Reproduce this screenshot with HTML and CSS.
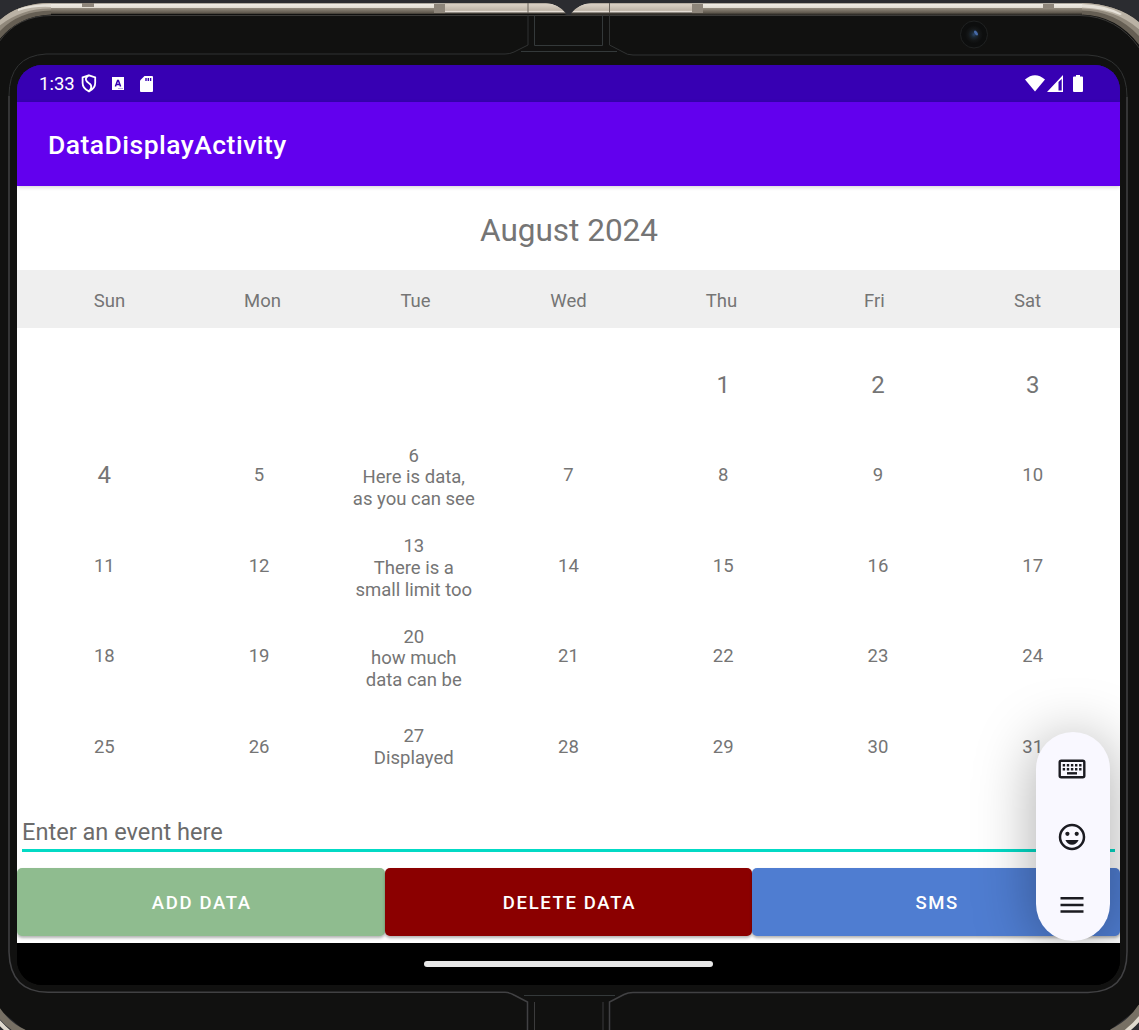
FILE: index.html
```html
<!DOCTYPE html>
<html lang="en">
<head>
<meta charset="utf-8">
<title>DataDisplayActivity</title>
<link rel="stylesheet" href="styles.css">
</head>
<body>
<div class="device">
  <svg class="device-frame" width="1139" height="1030" viewBox="0 0 1139 1030" aria-hidden="true">
    <defs>
      <linearGradient id="rail" gradientUnits="userSpaceOnUse" x1="0" y1="3" x2="0" y2="15">
        <stop offset="0" stop-color="#8d877c"/><stop offset=".12" stop-color="#efebe3"/>
        <stop offset=".38" stop-color="#e2ddd3"/><stop offset=".45" stop-color="#91897c"/>
        <stop offset=".8" stop-color="#615a4f"/><stop offset="1" stop-color="#252320"/>
      </linearGradient>
      <linearGradient id="cap" x1="0" y1="0" x2="0" y2="1">
        <stop offset="0" stop-color="#a39b8f"/><stop offset=".15" stop-color="#d8cfc3"/>
        <stop offset=".7" stop-color="#bdb3a6"/><stop offset=".8" stop-color="#ece5dc"/><stop offset="1" stop-color="#393530"/>
      </linearGradient>
      <radialGradient id="lens"><stop offset="0" stop-color="#2b4668"/><stop offset=".3" stop-color="#1a2732"/><stop offset=".65" stop-color="#141617"/><stop offset="1" stop-color="#0d0e0e"/></radialGradient>
    </defs>
    <path fill="#2b2c30" d="M0 0H1139V1030H0Z"/>
    <path fill="#111110" d="M0 38Q16 14 52 14H564L569 16L574 14H1080Q1120 14 1139 42V1008L1110 1030H24L0 1010Z"/>
    <path fill="url(#rail)" d="M50 3H545Q559 4 566 14H50ZM571 14Q578 4 592 3H1083V15H571Z"/>
    <path fill="url(#cap)" d="M445 3H545Q559 4 566 13.5H445ZM571 13.5Q578 4 592 3H692V13.5H571Z"/>
    <path fill="#8d857a" d="M434 4H445V13H434ZM692 4H703V13H692ZM82 3H94V7H82ZM1043 4H1054V8H1043Z"/>
    <path stroke="#69635b" d="M528 3V13M609.500 3V13"/>
    <path fill="#665f54" d="M-1 21Q18 3 51 3V14.500Q18 16 -1 40ZM1082 3Q1118 4 1140 23V46Q1117 15.500 1082 14.500Z"/>
    <path fill="#90887b" d="M-1 21Q18 3 51 3V10.500Q18 11 -1 32ZM1082 3Q1118 4 1140 23V37Q1116 11 1082 10.500Z"/>
    <path fill="#bab2a5" d="M-1 21Q18 3 51 3V8.500Q22 8 -1 26ZM1082 3Q1118 4 1140 23V30Q1116 9 1082 8.500Z"/>
    <path fill="#e5e0d7" d="M18 9Q32 4 51 4V7Q34 6 18 11ZM1082 4Q1107 5 1122 14L1120 15Q1104 8 1082 7.500Z"/>
    <g fill="none">
      <path stroke="#3b3a38" d="M-1 42Q17 15.500 52 15.500H1080Q1117 16 1140 49"/>
      <path stroke="#777064" stroke-width="7" d="M-3 1010Q8 1026 24 1033"/>
      <path stroke="#e0dace" stroke-width="4" d="M-3 1020Q6 1030 12 1034"/>
      <path stroke="#777064" stroke-width="8" d="M1142 1007Q1131 1024 1112 1033"/>
      <path stroke="#e0dace" stroke-width="4" d="M1143 1014Q1135 1025 1124 1033"/>
      <path stroke="#303232" d="M528 15V45L514 52Q510 54 505 54H46Q9 56 9 96"/>
      <path stroke="#303232" d="M609.500 15V45L623 52Q627 55 633 55H1088Q1127 57 1127 97"/>
      <path stroke="#414143" stroke-width="1.500" d="M9 96V952Q10 992 48 992.300H505Q510 992.500 514 995L527.500 1002V1030M609.500 1030V1002L624 994.500Q628 992.500 633 992.500H1088Q1127 992 1127 952V97"/>
      <path stroke="#34393a" d="M534.500 15V45.500H602.500V15M521 51.500H617M524 995.500H615"/>
      <path stroke="#3b3b3c" d="M534.500 1002V1030M603 1002V1030"/>
    </g>
    <circle cx="974" cy="34.500" r="13.500" fill="#0d0e0e" stroke="#202222"/>
    <circle cx="974" cy="34.500" r="9" fill="url(#lens)"/>
    <ellipse cx="976" cy="33" rx="1.500" ry="2.800" fill="#466aa8" transform="rotate(-35 976 33)"/>
  </svg>

  <main class="screen">
    <header class="status-bar">
      <div class="status-left">
        <span class="clock">1:33</span>
        <svg class="shield" width="16" height="19" viewBox="0 0 16 19"><path d="M8 1.300 14.200 3.500V9Q14.200 14.500 8 17.400 1.600 14.500 1.600 9V3.500ZM8 1.500Q4.200 3.500 5 6 5.500 7.600 8 9.300 10.700 11 10.200 13.500 9.700 15.800 8 17" fill="none" stroke="#fff" stroke-width="1.800"/></svg>
        <svg class="letter-badge" width="12" height="13" viewBox="0 0 12 13"><path fill="#fff" d="M0 0H12V13H0Z"/><path fill="none" stroke="#3700b3" stroke-width="1.500" d="M3.400 9.500 5.600 3.500H6.400L8.600 9.500M4.200 7.500H7.800"/><path stroke="#b8a8e4" d="M6 11.500H11"/></svg>
        <svg width="13" height="16" viewBox="0 0 13 16"><path fill="#fff" d="M4.500 0H12Q13 0 13 1V15Q13 16 12 16H1Q0 16 0 15V4.500Z"/><path stroke="#3700b3" stroke-width="1.400" d="M6 2V5M8.300 2V5M10.600 2V5"/></svg>
      </div>
      <div class="status-right">
        <svg width="20" height="17" viewBox="0 0 20 17"><path fill="#fff" d="M0 4.500Q10-4 20 4.500L10 16.500Z"/></svg>
        <svg class="signal" width="16" height="17" viewBox="0 0 16 17"><path fill="#fff" fill-rule="evenodd" d="M16 0V17H0ZM11.500 7V15.500H14.700V4Z"/></svg>
        <svg class="battery" width="10" height="17" viewBox="0 0 10 17"><path fill="#fff" d="M3 0H7V1.500H9Q10 1.500 10 2.500V16Q10 17 9 17H1Q0 17 0 16V2.500Q0 1.500 1 1.500H3Z"/></svg>
      </div>
    </header>
    <div class="app-bar"><h1>DataDisplayActivity</h1></div>
    <h2 class="month">August 2024</h2>
    <div class="weekdays"><span>Sun</span><span>Mon</span><span>Tue</span><span>Wed</span><span>Thu</span><span>Fri</span><span>Sat</span></div>
    <div class="days">
      <div></div><div></div><div></div><div></div><div class="large">1</div><div class="large">2</div><div class="large">3</div>
      <div class="large">4</div><div>5</div><div class="full">6<br>Here is data,<br>as you can see</div><div>7</div><div>8</div><div>9</div><div>10</div>
      <div>11</div><div>12</div><div class="full">13<br>There is a<br>small limit too</div><div>14</div><div>15</div><div>16</div><div>17</div>
      <div>18</div><div>19</div><div class="full">20<br>how much<br>data can be</div><div>21</div><div>22</div><div>23</div><div>24</div>
      <div>25</div><div>26</div><div>27<br>Displayed</div><div>28</div><div>29</div><div>30</div><div>31</div>
    </div>
    <div class="event-row"><input class="event-input" type="text" placeholder="Enter an event here" aria-label="Event"></div>
    <div class="actions">
      <button class="add">ADD DATA</button><button class="delete">DELETE DATA</button><button class="sms">SMS</button>
    </div>
    <div class="nav-bar"><div class="nav-handle"></div></div>
    <aside class="tools">
      <svg width="28" height="20" viewBox="0 0 28 20"><rect x="1.700" y="1.700" width="24.600" height="16.600" rx="1.500" fill="none" stroke="#1b1b21" stroke-width="2.400"/><path stroke="#1b1b21" stroke-width="2.400" stroke-dasharray="2.400 1.700" d="M4.700 6.200H24M4.700 10.200H24"/><path stroke="#1b1b21" stroke-width="2.400" d="M9 14.300H19"/></svg>
      <svg width="28" height="28" viewBox="0 0 28 28"><circle cx="14" cy="14" r="12" fill="none" stroke="#1b1b21" stroke-width="2.500"/><circle cx="9.400" cy="10.800" r="2.100" fill="#1b1b21"/><circle cx="18.700" cy="10.800" r="2.100" fill="#1b1b21"/><path fill="#1b1b21" d="M7.400 17H20.600Q18.500 21.700 14 21.700T7.400 17Z"/></svg>
      <svg width="24" height="18" viewBox="0 0 24 18"><path stroke="#1b1b21" stroke-width="2.500" d="M.5 2.300H23.500M.5 9H23.500M.5 15.500H23.500"/></svg>
    </aside>
  </main>
</div>
</body>
</html>
```
FILE: styles.css
```css
* { box-sizing: border-box; }
body { margin: 0; font-family: Roboto, sans-serif; background: #2b2c30; overflow: hidden; }
h1, h2 { margin: 0; }
svg { display: block; flex: none; }

.device { position: relative; width: 1139px; height: 1030px; padding: 65px 19px 45px 17px; }
.device-frame { position: absolute; inset: 0; }
.screen {
  position: relative;
  display: flex;
  flex-direction: column;
  height: 920px;
  overflow: hidden;
  border-radius: 25px;
  background: linear-gradient(#3700b3 50%, #000 50%);
  color: #757575;
}

.status-bar { display: flex; justify-content: space-between; height: 37px; padding: 0 37px 0 22px; background: #3700b3; color: #fff; }
.status-left, .status-right { display: flex; align-items: center; }
.clock { width: 42px; font-size: 18.5px; line-height: 22px; }
.letter-badge { margin: 0 16px 0 15px; }
.signal { margin: 0 10px 0 2px; }

.app-bar { position: relative; z-index: 1; display: flex; align-items: center; height: 84px; padding: 0 31px; background: #6200ee; box-shadow: 0 1px 4px rgba(0, 0, 0, .18); color: #fff; }
.app-bar h1 { font-size: 26.5px; font-weight: 500; letter-spacing: .47px; }

.month { height: 84px; padding: 4px 0 0 1px; background: #fff; font-size: 31.5px; font-weight: 400; line-height: 82px; text-align: center; }
.weekdays { display: grid; grid-template-columns: repeat(7, 1fr); height: 58px; padding: 2px 16px 0; background: #efefef; font-size: 18.5px; line-height: 58px; text-align: center; }

.days { display: grid; grid-template-columns: repeat(7, 1fr); grid-template-rows: repeat(5, 90.5px); height: 474px; padding: 12px 10px 0; background: #fff; font-size: 18.5px; line-height: 21.6px; text-align: center; }
.days > div { align-self: center; padding-top: 1px; white-space: nowrap; }
.days > .large { font-size: 24px; }
.days > .full { padding-top: 5px; }

.event-row { height: 66px; padding: 10px 5px 16px; background: #fff; }
.event-input { display: block; width: 100%; height: 40px; padding: 2px 0 0; border: 0; border-bottom: 3px solid #03dac5; outline: 0; background: none; color: #666; font: 23.6px Roboto, sans-serif; }
.event-input::placeholder { color: #6b6b6b; opacity: 1; }

.actions { display: grid; grid-template-columns: repeat(3, 1fr); height: 75px; padding-bottom: 7.5px; background: #fff; }
.actions button { padding: 2px 0 0 2px; border: 0; border-radius: 5px; color: #fff; font: 500 18.5px Roboto, sans-serif; letter-spacing: 1.65px; box-shadow: 0 2px 3px rgba(0, 0, 0, .3); }
.add { background: #8fbc8f; }
.delete { background: #8b0000; }
.sms { background: #4f7dd1; }

.nav-bar { position: relative; z-index: 2; display: flex; justify-content: center; height: 42px; padding-top: 18px; background: #000; }
.nav-handle { width: 289px; height: 6px; border-radius: 3px; background: #e8e8e8; }

.tools {
  position: absolute;
  z-index: 1;
  top: 667px;
  right: 10px;
  display: flex;
  flex-direction: column;
  align-items: center;
  justify-content: space-between;
  width: 74px;
  height: 209px;
  padding: 26.5px 2px 27px 0;
  border-radius: 37px;
  background: #f9f8ff;
  box-shadow: 0 6px 60px rgba(0, 0, 0, .34);
}
```
